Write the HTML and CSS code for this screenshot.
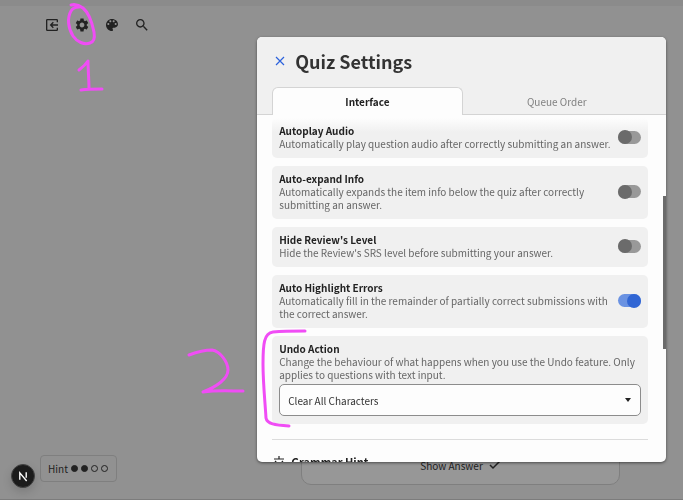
FILE: index.html
```html
<!DOCTYPE html>
<html lang="en">
<head>
    <meta charset="UTF-8">
    <meta name="viewport" content="width=device-width, initial-scale=1.0">
    <title>Quiz Settings</title>
    <link rel="stylesheet" href="styles.css">
</head>
<body>
    <div class="page">
        <div class="progress"></div>
        <nav class="toolbar">
            <button class="tool" type="button" aria-label="Exit quiz">
                <svg viewBox="0 0 24 24" class="line"><path d="M20 8V5a1 1 0 0 0-1-1H5a1 1 0 0 0-1 1v14a1 1 0 0 0 1 1h14a1 1 0 0 0 1-1v-3M21 12H10M14 8l-4 4 4 4"/></svg>
            </button>
            <button class="tool" type="button" aria-label="Settings">
                <svg viewBox="0 0 24 24"><path d="M19.14 12.94c.04-.3.06-.61.06-.94 0-.32-.02-.64-.07-.94l2.03-1.58c.18-.14.23-.41.12-.61l-1.92-3.32c-.12-.22-.37-.29-.59-.22l-2.39.96c-.5-.38-1.03-.7-1.62-.94l-.36-2.54c-.04-.24-.24-.41-.48-.41h-3.84c-.24 0-.43.17-.47.41l-.36 2.54c-.59.24-1.13.57-1.62.94l-2.39-.96c-.22-.08-.47 0-.59.22L2.74 8.87c-.12.21-.08.47.12.61l2.03 1.58c-.05.3-.09.63-.09.94s.02.64.07.94l-2.03 1.58c-.18.14-.23.41-.12.61l1.92 3.32c.12.22.37.29.59.22l2.39-.96c.5.38 1.03.7 1.62.94l.36 2.54c.05.24.24.41.48.41h3.84c.24 0 .44-.17.47-.41l.36-2.54c.59-.24 1.13-.56 1.62-.94l2.39.96c.22.08.47 0 .59-.22l1.92-3.32c.12-.22.07-.47-.12-.61l-2.01-1.58zM12 15.6c-1.98 0-3.6-1.62-3.6-3.6s1.62-3.6 3.6-3.6 3.6 1.62 3.6 3.6-1.62 3.6-3.6 3.6z"/></svg>
            </button>
            <button class="tool" type="button" aria-label="Theme">
                <svg viewBox="0 0 24 24"><path d="M12 3C7 3 3 7 3 12s4 9 9 9c.83 0 1.5-.67 1.5-1.5 0-.39-.15-.74-.39-1.01-.23-.26-.38-.61-.38-.99 0-.83.67-1.5 1.5-1.5H16c2.76 0 5-2.24 5-5 0-4.42-4.03-8-9-8zm-5.5 9c-.83 0-1.5-.67-1.5-1.5S5.67 9 6.5 9 8 9.67 8 10.5 7.33 12 6.5 12zm3-4C8.67 8 8 7.33 8 6.5S8.67 5 9.5 5s1.5.67 1.5 1.5S10.33 8 9.5 8zm5 0c-.83 0-1.5-.67-1.5-1.5S13.67 5 14.5 5s1.5.67 1.5 1.5S15.33 8 14.5 8zm3 4c-.83 0-1.5-.67-1.5-1.5S16.67 9 17.5 9s1.5.67 1.5 1.5-.67 1.5-1.5 1.5z"/></svg>
            </button>
            <button class="tool" type="button" aria-label="Search">
                <svg viewBox="0 0 24 24"><path d="M15.5 14h-.79l-.28-.27C15.41 12.59 16 11.11 16 9.5 16 5.91 13.09 3 9.5 3S3 5.91 3 9.5 5.91 16 9.5 16c1.61 0 3.09-.59 4.23-1.57l.27.28v.79l5 4.99L20.49 19l-4.99-5zm-6 0C7.01 14 5 11.99 5 9.5S7.01 5 9.5 5 14 7.01 14 9.5 11.99 14 9.5 14z"/></svg>
            </button>
        </nav>

        <footer class="actions">
            <button class="hint" type="button">
                Hint
                <span class="dots"><i class="dot full"></i><i class="dot full"></i><i class="dot"></i><i class="dot"></i></span>
            </button>
            <button class="answer" type="button">
                Show Answer
                <svg viewBox="0 0 12 12"><path d="M1 6l3 3 7-7"/></svg>
            </button>
        </footer>
    </div>

    <button class="dev-badge" type="button" aria-label="Dev tools">
        <svg viewBox="0 0 24 24"><path d="M8.5 16V8.5l7.5 9M15.5 8v6"/></svg>
    </button>

    <div class="dialog" role="dialog" aria-labelledby="dialog-title">
        <header class="dialog-header">
            <div class="title-row">
                <button class="close" type="button" aria-label="Close">
                    <svg viewBox="0 0 10 10"><path d="M1 1l8 8M9 1l-8 8"/></svg>
                </button>
                <h1 id="dialog-title">Quiz Settings</h1>
            </div>
            <div class="tabs" role="tablist">
                <button class="tab active" type="button" role="tab" aria-selected="true">Interface</button>
                <button class="tab" type="button" role="tab" aria-selected="false">Queue Order</button>
            </div>
        </header>

        <div class="settings">
            <div class="card first">
                <label for="autoplay"><b>Autoplay Audio</b>Automatically play question audio after correctly submitting an answer.</label>
                <input class="switch" type="checkbox" id="autoplay">
            </div>
            <div class="card">
                <label for="expand"><b>Auto-expand Info</b>Automatically expands the item info below the quiz after correctly submitting an answer.</label>
                <input class="switch" type="checkbox" id="expand">
            </div>
            <div class="card">
                <label for="hide-level"><b>Hide Review's Level</b>Hide the Review's SRS level before submitting your answer.</label>
                <input class="switch" type="checkbox" id="hide-level">
            </div>
            <div class="card">
                <label for="highlight"><b>Auto Highlight Errors</b>Automatically fill in the remainder of partially correct submissions with the correct answer.</label>
                <input class="switch" type="checkbox" id="highlight" checked>
            </div>
            <div class="card stacked">
                <label for="undo"><b>Undo Action</b>Change the behaviour of what happens when you use the Undo feature. Only applies to questions with text input.</label>
                <div class="select-box">
                    <select id="undo">
                        <option>Clear All Characters</option>
                    </select>
                    <svg viewBox="0 0 6 4"><path d="M0 0h6L3 4z"/></svg>
                </div>
            </div>
            <hr>
            <h2>
                <svg viewBox="0 0 12 12"><path d="M6 0v3M1 3h10M2 5l3 3-3 4M10 5L7 8l3 4"/></svg>
                Grammar Hint
            </h2>
        </div>
        <div class="scroll-track"><div class="scroll-thumb"></div></div>
    </div>

    <!-- marker notes drawn over the page -->
    <svg class="notes" viewBox="0 0 683 500">
        <path d="M71 5c4-1 8 0 12 3 6 5 9 14 11 24 1 6 0 10-4 11-6 2-13-1-17-7-5-8-6-18-2-25 2-3 5-4 8-4"/>
        <path d="M79 70c4-3 7-6 9-9 0 9 1 19 1 28M81 90c7-1 14-1 21-1"/>
        <path d="M189 355c8-3 16-5 23-5 8 1 16 12 16 20 0 9-12 17-25 22 13-2 27-1 40-1"/>
        <path d="M305 331c-11 0-21 0-32 1-9 1-10 12-10 32 0 19 2 37 3 54 1 6 9 7 23 8"/>
    </svg>
</body>
</html>
```

FILE: styles.css
```css
* {
    box-sizing: border-box;
}
body {
    margin: 0;
    font-family: "Noto Sans CJK JP", "Noto Sans", sans-serif;
    font-size: 10px;
    line-height: 13px;
    color: #222;
    background-color: #919191;
    overflow: hidden;
}
button, select {
    font: inherit;
    color: inherit;
    border: none;
    background: none;
    padding: 0;
    margin: 0;
    cursor: pointer;
}
svg {
    display: block;
}
.page {
    min-height: 100vh;
    display: flex;
    flex-direction: column;
    border-bottom: 1px solid #7c7c7c;
}
.progress {
    height: 6px;
    background: #8b8b8b;
}
.toolbar {
    display: flex;
    gap: 14px;
    padding: 11px 44px;
}
.tool svg {
    width: 16px;
    height: 16px;
    fill: #222;
}
.tool .line {
    fill: none;
    stroke: #222;
    stroke-width: 2;
}
.actions {
    margin-top: auto;
    display: flex;
    justify-content: space-between;
    align-items: flex-end;
    padding: 0 63px 14px 40px;
}
.hint {
    display: flex;
    align-items: center;
    gap: 3px;
    height: 27px;
    padding: 0 8px 0 7px;
    margin-bottom: 3px;
    border: 1px solid #7f7f7f;
    border-radius: 4px;
}
.dots {
    display: flex;
    gap: 3px;
}
.dot {
    width: 7px;
    height: 7px;
    border: 1px solid #222;
    border-radius: 50%;
}
.full {
    background: #222;
}
.answer {
    display: flex;
    align-items: center;
    justify-content: center;
    gap: 6px;
    width: 55%;
    height: 40px;
    background: #979797;
    border: 1px solid #7f7f7f;
    border-radius: 10px;
}
.answer svg {
    width: 12px;
    height: 12px;
    fill: none;
    stroke: #222;
    stroke-width: 1.5;
}
.dev-badge {
    position: fixed;
    left: 11px;
    bottom: 12px;
    width: 24px;
    height: 24px;
    background: #1c1c1c;
    border: 1px solid #444;
    border-radius: 50%;
    box-shadow: 0 4px 10px rgba(0, 0, 0, 0.15);
}
.dev-badge svg {
    fill: none;
    stroke: white;
    stroke-width: 1.5;
}
.dialog {
    position: fixed;
    top: 37px;
    right: 17px;
    bottom: 38px;
    width: calc(60% - 1px);
    display: flex;
    flex-direction: column;
    background: #fdfdfd;
    border-radius: 5px;
    box-shadow: 0 1px 3px rgba(0, 0, 0, 0.5);
    overflow: hidden;
}
.dialog-header {
    background: #f0f0f0;
    flex: none;
}
.title-row {
    display: flex;
    align-items: center;
    gap: 10px;
    height: 50px;
    padding: 0 18px 2px;
}
.close svg {
    width: 10px;
    height: 10px;
    fill: none;
    stroke: #2c62dc;
    stroke-width: 1.2;
}
h1 {
    margin: 0;
    font-size: 18px;
    line-height: 26px;
    color: #333;
}
.tabs {
    display: flex;
    padding: 0 15px;
    box-shadow: inset 0 -1px #d4d4d4;
}
.tab {
    flex: 1;
    height: 28px;
    color: #808080;
}
.active {
    font-weight: bold;
    color: #222;
    background: #fdfdfd;
    border: 1px solid #d4d4d4;
    border-bottom: none;
    border-radius: 6px 6px 0 0;
}
.settings {
    flex: 1;
    min-height: 0;
    overflow: hidden;
    display: flex;
    flex-direction: column;
    gap: 8px;
    padding: 3px 18px 0 15px;
}
.card {
    flex: none;
    display: flex;
    align-items: center;
    justify-content: space-between;
    gap: 4px;
    padding: 6px 7px 8px;
    background: #f0f0f0;
    border-radius: 5px;
    color: #666;
}
.card b {
    display: block;
    color: #222;
}
.first {
    background: linear-gradient(#fdfdfd, #f0f0f0 14px);
}
.stacked {
    flex-direction: column;
    align-items: stretch;
    gap: 3px;
}
.switch {
    appearance: none;
    flex: none;
    display: flex;
    align-items: center;
    width: 23px;
    height: 13px;
    margin: 0;
    background: #999;
    border-radius: 7px;
}
.switch::before {
    content: "";
    width: 14px;
    height: 14px;
    flex: none;
    border-radius: 50%;
    background: #6b6b6b;
}
.switch:checked {
    background: #6a92e2;
    justify-content: flex-end;
}
.switch:checked::before {
    background: #3166d4;
}
.select-box {
    display: grid;
    align-items: center;
}
.select-box > * {
    grid-area: 1 / 1;
}
.select-box select {
    appearance: none;
    width: 100%;
    height: 32px;
    padding: 0 8px;
    background: #fdfdfd;
    border: 1px solid #8c8c8c;
    border-radius: 5px;
    color: #333;
}
.select-box svg {
    width: 6px;
    height: 4px;
    margin-right: 10px;
    justify-self: end;
    fill: #222;
    pointer-events: none;
}
hr {
    flex: none;
    width: 100%;
    height: 1px;
    margin: 7px 0;
    border: none;
    background: #dcdcdc;
}
h2 {
    flex: none;
    display: flex;
    align-items: center;
    gap: 6px;
    margin: 0;
    padding-left: 1px;
    font-size: 10px;
    line-height: 14px;
}
h2 svg {
    width: 12px;
    height: 12px;
    fill: none;
    stroke: #222;
    stroke-width: 1.2;
}
.scroll-track {
    position: absolute;
    top: 78px;
    right: 0;
    bottom: 0;
    width: 3px;
}
.scroll-thumb {
    height: 44%;
    margin-top: 81px;
    background: #6b6b6b;
}
h2 {
    font-size: 11px;
}
.notes {
    position: fixed;
    top: 0;
    left: 0;
    width: 100%;
    fill: none;
    stroke: #f04df5;
    stroke-width: 3;
    stroke-linecap: round;
    stroke-linejoin: round;
    pointer-events: none;
}
```
